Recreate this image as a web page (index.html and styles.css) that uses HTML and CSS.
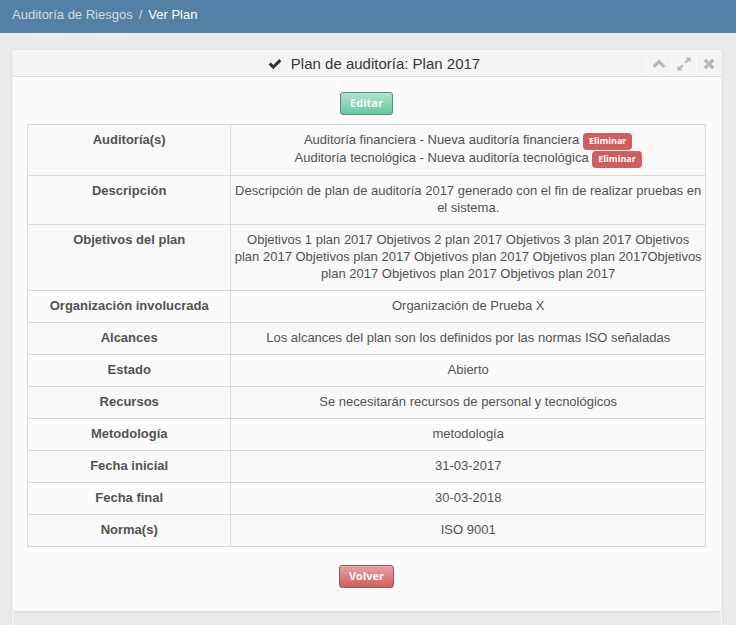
FILE: index.html
```
<!DOCTYPE html>
<html lang="es">
<head>
<meta charset="utf-8">
<title>Ver Plan</title>
<meta name="viewport" content="width=device-width, initial-scale=1">
<link rel="stylesheet" href="styles.css">
</head>
<body>
<nav class="breadcrumb" aria-label="Ruta">
  <a href="#">Auditoría de Riesgos</a>
  <span class="separator">/</span>
  <a href="#" class="current">Ver Plan</a>
</nav>
<main class="content">
  <section class="box">
    <header class="box-header">
      <h1 class="box-name">
        <svg class="check" viewBox="0 0 14 12" aria-hidden="true"><path d="M0.6 6.6 2.8 4.4 5.3 6.9 11.2 1 13.4 3.2 5.3 11.3Z"/></svg>
        <span>Plan de auditoría: Plan 2017</span>
      </h1>
      <div class="box-icons">
        <button type="button" aria-label="Contraer"><svg viewBox="0 0 14 14"><path d="M7 2.3 13.4 8.7 11.2 10.9 7 6.7 2.8 10.9 0.6 8.7Z"/></svg></button>
        <button type="button" aria-label="Expandir"><svg viewBox="0 0 14 14"><path d="M8.4 0.5H13.5V5.6L11.7 3.8 8.9 6.6 7.4 5.1 10.2 2.3ZM0.5 8.4 2.3 10.2 5.1 7.4 6.6 8.9 3.8 11.7 5.6 13.5H0.5Z"/></svg></button>
        <button type="button" aria-label="Cerrar"><svg viewBox="0 0 14 14"><path d="M4 1.6 7 4.6 10 1.6 12.4 4 9.4 7 12.4 10 10 12.4 7 9.4 4 12.4 1.6 10 4.6 7 1.6 4Z"/></svg></button>
      </div>
    </header>
    <div class="box-content">
      <button type="button" class="btn btn-success">Editar</button>
      <table class="plan">
        <tbody>
          <tr><th scope="row">Auditoría(s)</th><td>
            <div class="audit">Auditoría financiera - Nueva auditoría financiera <button type="button" class="btn-delete">Eliminar</button></div>
            <div class="audit">Auditoría tecnológica - Nueva auditoría tecnológica <button type="button" class="btn-delete">Eliminar</button></div>
          </td></tr>
          <tr><th scope="row">Descripción</th><td>Descripción de plan de auditoría 2017 generado con el fin de realizar pruebas en el sistema.</td></tr>
          <tr><th scope="row">Objetivos del plan</th><td>Objetivos 1 plan 2017 Objetivos 2 plan 2017 Objetivos 3 plan 2017 Objetivos plan 2017 Objetivos plan 2017 Objetivos plan 2017 Objetivos plan 2017Objetivos plan 2017 Objetivos plan 2017 Objetivos plan 2017</td></tr>
          <tr><th scope="row">Organización involucrada</th><td>Organización de Prueba X</td></tr>
          <tr><th scope="row">Alcances</th><td>Los alcances del plan son los definidos por las normas ISO señaladas</td></tr>
          <tr><th scope="row">Estado</th><td>Abierto</td></tr>
          <tr><th scope="row">Recursos</th><td>Se necesitarán recursos de personal y tecnológicos</td></tr>
          <tr><th scope="row">Metodología</th><td>metodología</td></tr>
          <tr><th scope="row">Fecha inicial</th><td>31-03-2017</td></tr>
          <tr><th scope="row">Fecha final</th><td>30-03-2018</td></tr>
          <tr><th scope="row">Norma(s)</th><td>ISO 9001</td></tr>
        </tbody>
      </table>
      <button type="button" class="btn btn-danger">Volver</button>
    </div>
  </section>
</main>
</body>
</html>
```
FILE: styles.css
```
* { box-sizing: border-box; }
body {
  margin: 0;
  min-height: 100vh;
  display: flex;
  flex-direction: column;
  background: #ebebeb;
  color: #525252;
  font: 13px/17px "Liberation Sans", Arial, sans-serif;
}
button { font: inherit; cursor: pointer; }
.breadcrumb {
  display: flex;
  gap: 6px;
  height: 33px;
  padding: 6px 12px;
  background: #5380a4;
  color: #d5dade;
}
.breadcrumb a { color: inherit; text-decoration: none; }
.breadcrumb .current { color: #fff; }
.content {
  flex: 1;
  display: flex;
  flex-direction: column;
  margin: 17px 14px 0 12px;
  border: 1px solid #f8f8f8;
  border-bottom: 0;
  border-radius: 3px 3px 0 0;
  box-shadow: 0 0 4px #d8d8d8;
}
.box {
  background: #fcfcfc;
  border-radius: 0 0 3px 3px;
  box-shadow: 0 1px 2px #d8d8d8;
}
.box-header {
  display: grid;
  grid-template-columns: 1fr auto;
  height: 26px;
  background: #f4f4f4;
  border-bottom: 1px solid #dcdcdc;
}
.box-name {
  grid-area: 1 / 1 / 2 / 3;
  display: flex;
  justify-content: center;
  align-items: center;
  gap: 9px;
  margin: 0 0 0 14px;
  color: #363636;
  font-size: 15px;
  font-weight: normal;
}
.check { width: 14px; height: 12px; fill: #333; }
.box-icons { grid-area: 1 / 2; display: flex; }
.box-icons button {
  display: grid;
  place-items: center;
  width: 25px;
  padding: 0;
  border: 0;
  border-left: 1px solid #fafafa;
  background: none;
}
.box-icons svg { width: 14px; height: 14px; fill: #b8b8b8; }
.box-content {
  display: flex;
  flex-direction: column;
  align-items: center;
  padding: 15px 15px 23px 14px;
}
.btn {
  height: 23px;
  padding: 0 9px 1px;
  border: 1px solid;
  border-radius: 3px;
  color: #f8f8f8;
  font: bold 11px/20px "Open Sans", sans-serif;
}
.btn-success { background: linear-gradient(#b5e4d0, #63c99b); border-color: #4d9473; }
.btn-danger { background: linear-gradient(#e4a4a6, #d15e5e); border-color: #9b5a58; }
.plan {
  width: 100%;
  margin: 9px 0 18px;
  border-collapse: collapse;
}
.plan th, .plan td {
  padding: 6px 2px 8px;
  border: 1px solid #dadada;
  text-align: center;
  vertical-align: top;
}
.plan th { width: 30%; }
.plan tr:nth-child(odd) { background: #f9f9f9; }
.audit { height: 18px; }
.btn-delete {
  height: 17px;
  padding: 0 6px 1px;
  border: 0;
  border-radius: 4px;
  background: #d15e5e;
  color: #fff;
  font: bold 9px/16px "Open Sans", sans-serif;
}
```
